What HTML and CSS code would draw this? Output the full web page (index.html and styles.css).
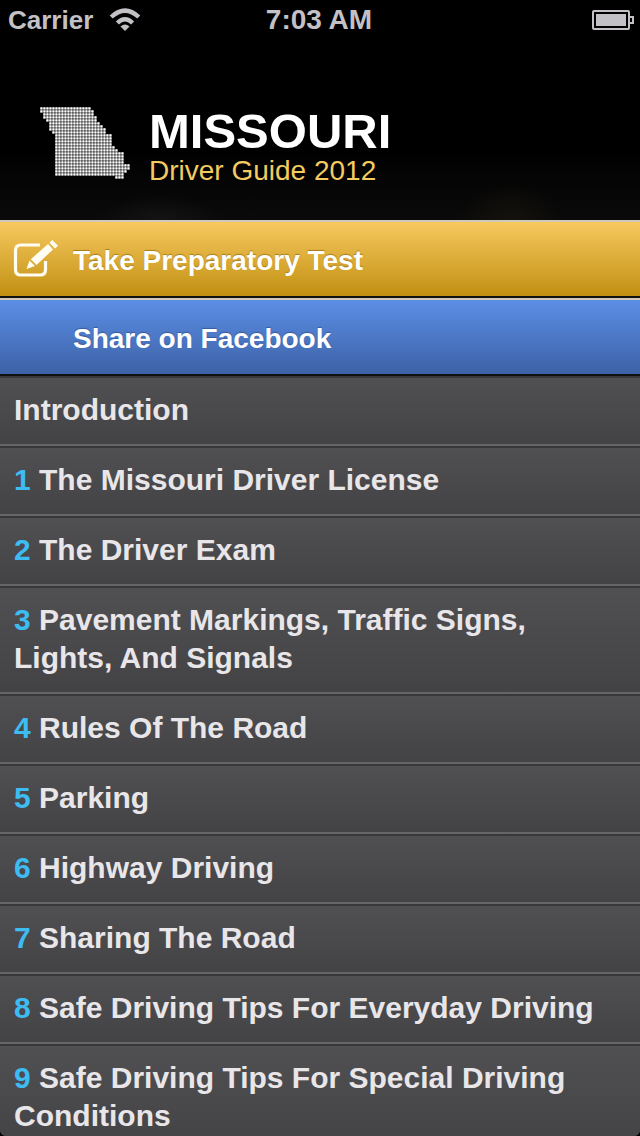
FILE: index.html
```html
<!DOCTYPE html>
<html lang="en">
<head>
<meta charset="utf-8">
<meta name="viewport" content="width=device-width, initial-scale=1">
<title>Missouri Driver Guide 2012</title>
<link rel="stylesheet" href="styles.css">
</head>
<body>
<div class="screen">
  <div class="status">
    <div class="status-left">
      <span>Carrier</span>
      <svg class="wifi" viewBox="0 0 32 24" aria-label="Wi-Fi">
        <path d="M2.200 9Q16-3.800 29.800 9M8.400 15Q16 7.600 23.600 15" fill="none" stroke="#c3c1c5" stroke-width="4.400"/>
        <path d="M11.500 18.400Q16 14.400 20.500 18.400L16 23Z" fill="#c3c1c5"/>
      </svg>
    </div>
    <span class="time">7:03 AM</span>
    <div class="status-right">
      <svg class="battery" viewBox="0 0 42 20" aria-label="Battery full">
        <rect x="1" y="1" width="36" height="18" rx="1" fill="none" stroke="#c3c1c5" stroke-width="2"/>
        <rect x="4" y="4" width="30" height="12" fill="#c3c1c5"/>
        <path d="M38 7h3v6h-3" fill="none" stroke="#c3c1c5" stroke-width="2"/>
      </svg>
    </div>
  </div>

  <header class="brand">
    <svg class="state" viewBox="0 0 30 24" aria-hidden="true">
      <defs>
        <pattern id="dots" width="1" height="1" patternUnits="userSpaceOnUse">
          <rect width="1" height="1" fill="#505050"/>
          <rect x=".1" y=".1" width=".74" height=".74" rx=".25" fill="#fff"/>
        </pattern>
      </defs>
      <path fill="url(#dots)" d="M0 0H17V1H18V3H19V5H20V6H21V7H22V9H24V13H25V14H26V15H28V19H30V21H29V22H28V24H25V23H5V9H4V8H3V5H2V4H1V2H0Z"/>
    </svg>
    <div>
      <h1 class="title">MISSOURI</h1>
      <p class="subtitle">Driver Guide 2012</p>
    </div>
  </header>

  <button class="action gold" type="button">
    <svg class="action-icon" viewBox="0 0 44 40" aria-hidden="true">
      <path d="M27 4H8Q2.500 4 2.500 9.500V28.500Q2.500 34 8 34H27Q32.500 34 32.500 28.500V20" fill="none" stroke="#fffdf2" stroke-width="3.200"/>
      <path d="M13.500 28L16.500 19.500L22 25ZM17.800 18.200L35 3L40 8.500L23.500 24ZM36.500 1.700L39.200 -1L45 4.800L42 7.400Z" fill="#fffdf2"/>
    </svg>
    <span>Take Preparatory Test</span>
  </button>
  <button class="action blue" type="button">
    <span class="action-icon"></span>
    <span>Share on Facebook</span>
  </button>

  <nav class="chapters">
    <a class="row" href="#intro">Introduction</a>
    <a class="row" href="#c1"><span class="num">1</span> The Missouri Driver License</a>
    <a class="row" href="#c2"><span class="num">2</span> The Driver Exam</a>
    <a class="row" href="#c3"><span class="num">3</span> Pavement Markings, Traffic Signs, Lights, And Signals</a>
    <a class="row" href="#c4"><span class="num">4</span> Rules Of The Road</a>
    <a class="row" href="#c5"><span class="num">5</span> Parking</a>
    <a class="row" href="#c6"><span class="num">6</span> Highway Driving</a>
    <a class="row" href="#c7"><span class="num">7</span> Sharing The Road</a>
    <a class="row" href="#c8"><span class="num">8</span> Safe Driving Tips For Everyday Driving</a>
    <a class="row" href="#c9"><span class="num">9</span> Safe Driving Tips For Special Driving Conditions</a>
  </nav>
</div>
</body>
</html>
```

FILE: styles.css
```css
* {
  box-sizing: border-box;
}

body {
  margin: 0;
  background: #000;
  font-family: "Liberation Sans", Arial, sans-serif;
}

.screen {
  display: flex;
  flex-direction: column;
  height: 100vh;
  overflow: hidden;
  border-radius: 0 0 6px 6px;
}

.status {
  flex: none;
  display: grid;
  grid-template-columns: 1fr auto 1fr;
  align-items: center;
  height: 40px;
  padding: 0 6px 0 4px;
  color: #c3c1c5;
  font-size: 26px;
  font-weight: bold;
}

.status-left {
  display: flex;
  align-items: center;
  gap: 16px;
  padding-left: 4px;
}

.status-right {
  display: flex;
  justify-content: flex-end;
}

.time {
  font-size: 28px;
}

.wifi {
  width: 32px;
  height: 24px;
}

.battery {
  width: 42px;
  height: 20px;
}

.brand {
  flex: none;
  display: flex;
  align-items: flex-start;
  gap: 19px;
  height: 180px;
  padding: 67px 40px 0;
  background:
    radial-gradient(ellipse 50px 36px at 510px 100%, #15120d, transparent),
    radial-gradient(ellipse 60px 24px at 160px 100%, #141414, transparent),
    linear-gradient(#000 60%, #0a0a0a);
}

.state {
  flex: none;
  width: 90px;
  height: 72px;
}

.title {
  margin: 0;
  color: #fff;
  font-size: 49px;
  line-height: 49px;
}

.subtitle {
  margin: 0;
  color: #f4cb61;
  font-size: 28px;
  line-height: 30px;
}

.action {
  flex: none;
  display: flex;
  align-items: center;
  gap: 16px;
  width: 100%;
  height: 78px;
  padding: 3px 13px 0;
  border: 0;
  border-top: 2px solid #d0c9b8;
  border-bottom: 2px solid #111;
  color: #fff;
  font: bold 28px "Liberation Sans", Arial, sans-serif;
  text-align: left;
}

.action-icon {
  flex: none;
  width: 44px;
  height: 40px;
  overflow: visible;
}

.gold {
  background: linear-gradient(#f7c95f, #c19012);
  text-shadow: 0 -1px 1px #a87c18;
}

.blue {
  background: linear-gradient(#5b8ee6, #3d62a6);
  text-shadow: 0 -1px 1px #365a9c;
}

.chapters {
  flex: 1;
  min-height: 0;
  overflow: hidden;
  background: #454446;
}

.row {
  display: block;
  padding: 13px 14px 15px;
  border-top: 2px solid #393839;
  border-bottom: 2px solid #666567;
  background: linear-gradient(#504f51, #434244);
  color: #e8e6e9;
  font-size: 30px;
  font-weight: bold;
  line-height: 38px;
  text-decoration: none;
}

.num {
  color: #3dbcf2;
}
```
